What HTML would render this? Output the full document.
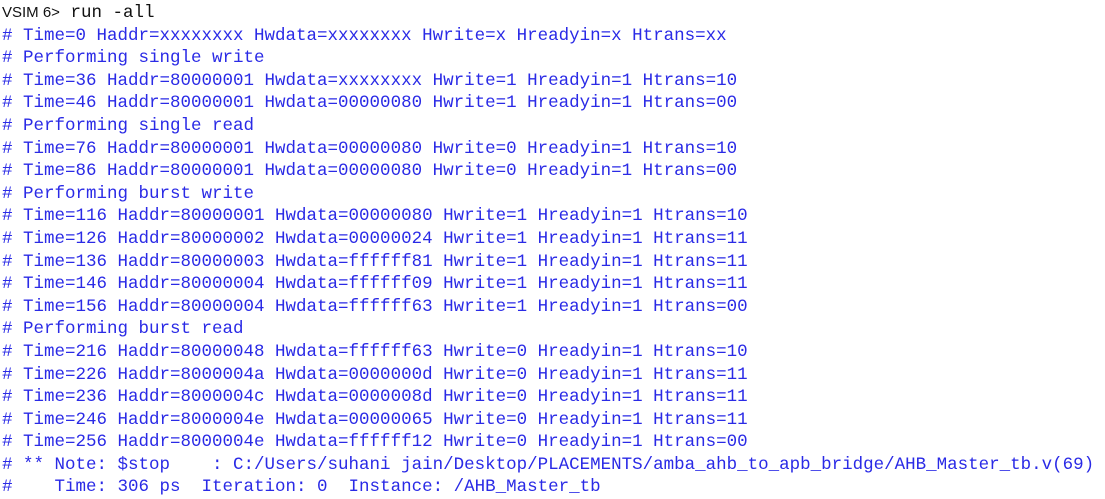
<!DOCTYPE html>
<html><head><meta charset="utf-8"><style>
html,body{margin:0;padding:0;background:#fff;width:1105px;height:496px;overflow:hidden}
.c{position:absolute;left:2px;top:2px;font-family:"Liberation Mono",monospace;font-size:17.5px;line-height:22.6px;color:#2a2ae6;white-space:pre}
.k{color:#111}
.s{font-family:"Liberation Sans",sans-serif;font-size:15px;color:#111}
</style></head><body><div class="c"><span class="s">VSIM 6&gt;</span><span class="k"> run -all</span>
# Time=0 Haddr=xxxxxxxx Hwdata=xxxxxxxx Hwrite=x Hreadyin=x Htrans=xx
# Performing single write
# Time=36 Haddr=80000001 Hwdata=xxxxxxxx Hwrite=1 Hreadyin=1 Htrans=10
# Time=46 Haddr=80000001 Hwdata=00000080 Hwrite=1 Hreadyin=1 Htrans=00
# Performing single read
# Time=76 Haddr=80000001 Hwdata=00000080 Hwrite=0 Hreadyin=1 Htrans=10
# Time=86 Haddr=80000001 Hwdata=00000080 Hwrite=0 Hreadyin=1 Htrans=00
# Performing burst write
# Time=116 Haddr=80000001 Hwdata=00000080 Hwrite=1 Hreadyin=1 Htrans=10
# Time=126 Haddr=80000002 Hwdata=00000024 Hwrite=1 Hreadyin=1 Htrans=11
# Time=136 Haddr=80000003 Hwdata=ffffff81 Hwrite=1 Hreadyin=1 Htrans=11
# Time=146 Haddr=80000004 Hwdata=ffffff09 Hwrite=1 Hreadyin=1 Htrans=11
# Time=156 Haddr=80000004 Hwdata=ffffff63 Hwrite=1 Hreadyin=1 Htrans=00
# Performing burst read
# Time=216 Haddr=80000048 Hwdata=ffffff63 Hwrite=0 Hreadyin=1 Htrans=10
# Time=226 Haddr=8000004a Hwdata=0000000d Hwrite=0 Hreadyin=1 Htrans=11
# Time=236 Haddr=8000004c Hwdata=0000008d Hwrite=0 Hreadyin=1 Htrans=11
# Time=246 Haddr=8000004e Hwdata=00000065 Hwrite=0 Hreadyin=1 Htrans=11
# Time=256 Haddr=8000004e Hwdata=ffffff12 Hwrite=0 Hreadyin=1 Htrans=00
# ** Note: $stop    : C:/Users/suhani jain/Desktop/PLACEMENTS/amba_ahb_to_apb_bridge/AHB_Master_tb.v(69)
#    Time: 306 ps  Iteration: 0  Instance: /AHB_Master_tb</div></body></html>
